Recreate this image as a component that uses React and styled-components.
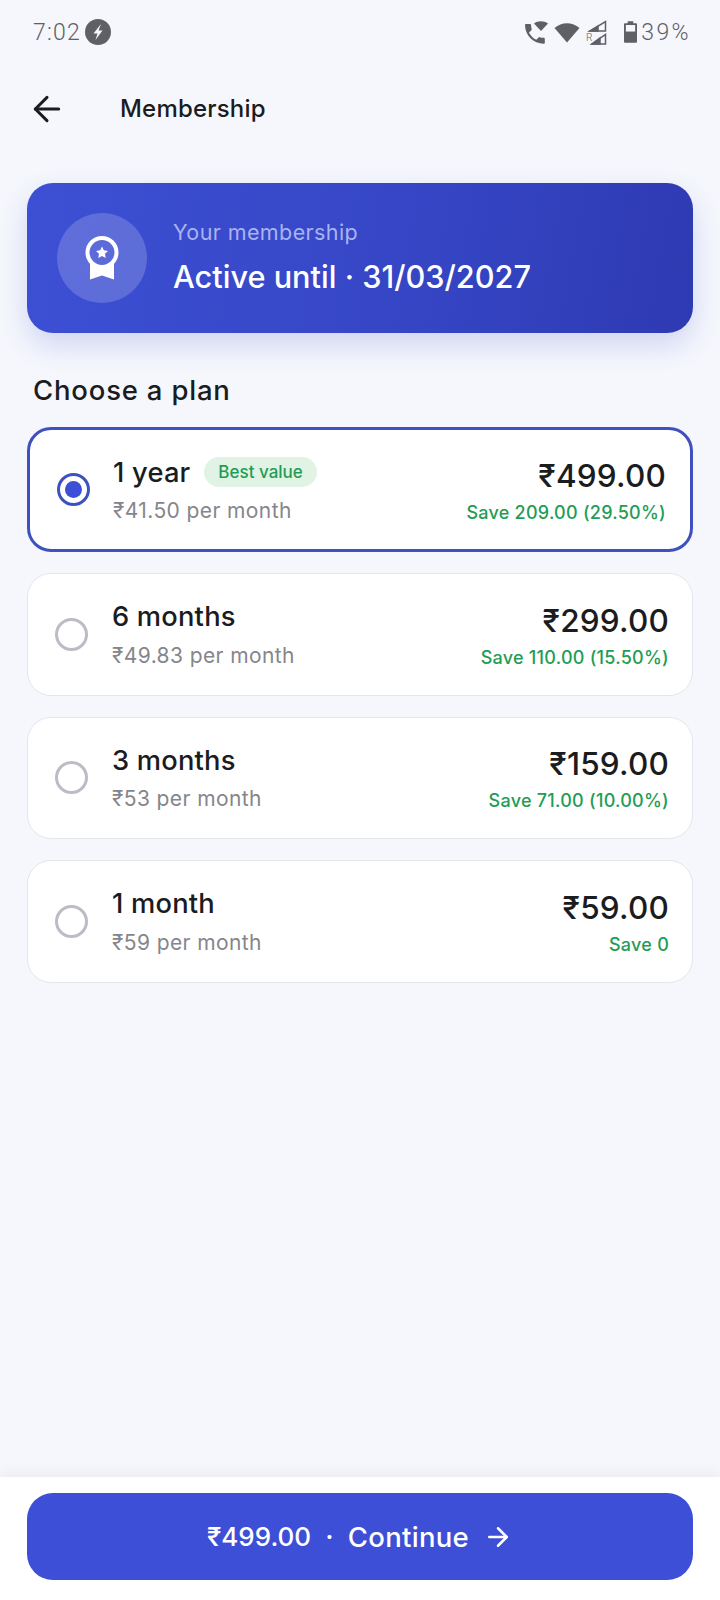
import React from 'react';
import styled, { createGlobalStyle } from 'styled-components';
import { ArrowLeft, ArrowRight } from 'lucide-react';

const GlobalStyle = createGlobalStyle`
  html, body {
    margin: 0;
    padding: 0;
    background: #f5f7fc;
  }
  * {
    box-sizing: border-box;
  }
`;

const Screen = styled.div`
  width: 720px;
  height: 1600px;
  display: flex;
  flex-direction: column;
  background: #f5f7fc;
  font-family: Inter, "Liberation Sans", sans-serif;
  color: #1b1c20;
  overflow: hidden;
`;

const StatusBar = styled.div`
  height: 64px;
  flex: none;
  display: flex;
  align-items: center;
  justify-content: space-between;
  padding: 0 29px 0 33px;
  color: #5f6066;
  font-family: Roboto, sans-serif;
  font-size: 23px;
  font-weight: 300;
  letter-spacing: 1.2px;
`;

const StatusGroup = styled.div`
  display: flex;
  align-items: center;
  gap: ${(p) => p.$gap}px;
`;

const BatteryText = styled.span`
  letter-spacing: 2.4px;
`;

const AppBar = styled.div`
  height: 88px;
  flex: none;
  display: flex;
  align-items: center;
  padding: 0 0 0 27px;
  gap: 53px;
`;

const BackIcon = styled(ArrowLeft)`
  margin-top: 2px;
`;

const Title = styled.div`
  font-size: 24px;
  font-weight: 500;
  letter-spacing: 0.2px;
  color: #1b1c20;
`;

const Content = styled.div`
  flex: 1;
  display: flex;
  flex-direction: column;
  padding: 31px 27px 0;
`;

const Banner = styled.div`
  height: 150px;
  flex: none;
  display: flex;
  align-items: center;
  gap: 26px;
  padding: 0 30px;
  border-radius: 26px;
  background: linear-gradient(100deg, #3d50d4 0%, #3545c4 60%, #2e3ab2 100%);
  box-shadow: 0 12px 28px rgba(61, 80, 212, 0.2);
`;

const Medal = styled.div`
  width: 90px;
  height: 90px;
  flex: none;
  display: flex;
  align-items: center;
  justify-content: center;
  border-radius: 50%;
  background: rgba(255, 255, 255, 0.18);
`;

const BannerText = styled.div`
  display: flex;
  flex-direction: column;
  gap: 13px;
  padding-bottom: 3px;
`;

const BannerLabel = styled.div`
  font-size: 21.500px;
  letter-spacing: 0.4px;
  color: #a9b3f0;
`;

const BannerValue = styled.div`
  font-size: 30.700px;
  font-weight: 500;
  color: #ffffff;
`;

const Heading = styled.div`
  margin: 41px 0 21px 6px;
  font-size: 27.500px;
  font-weight: 500;
  letter-spacing: 0.8px;
  line-height: 32px;
`;

const PlanList = styled.div`
  display: flex;
  flex-direction: column;
  gap: 21px;
`;

const Plan = styled.div`
  height: ${(p) => (p.$selected ? 125 : 122.5)}px;
  display: flex;
  align-items: center;
  padding: 0 ${(p) => (p.$selected ? 24 : 23)}px 0 27px;
  border-radius: 24px;
  background: #ffffff;
  border: ${(p) => (p.$selected ? '3px solid #3f50bf' : '1.5px solid #e4e6ec')};
`;

const Radio = styled.div`
  width: 33px;
  height: 33px;
  flex: none;
  display: flex;
  align-items: center;
  justify-content: center;
  border-radius: 50%;
  border: 3px solid ${(p) => (p.$selected ? '#3f50bf' : '#babcc6')};
`;

const RadioDot = styled.div`
  width: 17px;
  height: 17px;
  border-radius: 50%;
  background: #3d4fd6;
`;

const PlanInfo = styled.div`
  flex: 1;
  margin-left: ${(p) => (p.$selected ? 23 : 24)}px;
  display: flex;
  flex-direction: column;
  gap: 10px;
`;

const PlanNameRow = styled.div`
  display: flex;
  align-items: center;
  gap: 14px;
  height: 32px;
`;

const PlanName = styled.div`
  font-size: 27.300px;
  font-weight: 500;
  letter-spacing: 0.2px;
  color: #1b1c20;
`;

const Badge = styled.div`
  height: 30px;
  padding: 0 14px;
  display: flex;
  align-items: center;
  border-radius: 15px;
  background: #e0f3e4;
  color: #1f9d55;
  font-size: 17px;
  font-weight: 500;
`;

const PerMonth = styled.div`
  font-size: 21px;
  letter-spacing: 0.4px;
  color: #85868c;
`;

const Prices = styled.div`
  display: flex;
  flex-direction: column;
  align-items: flex-end;
  gap: 7px;
`;

const Price = styled.div`
  font-size: 31.500px;
  font-weight: 500;
  letter-spacing: 0.2px;
  color: #1b1c20;
`;

const Save = styled.div`
  font-size: 18px;
  font-weight: 500;
  letter-spacing: 0.25px;
  color: #1f9d55;
`;

const Footer = styled.div`
  height: 123px;
  flex: none;
  padding: 16px 27px 20px;
  background: #ffffff;
  box-shadow: 0 -4px 14px rgba(30, 35, 60, 0.05);
`;

const Continue = styled.div`
  height: 87px;
  display: flex;
  align-items: center;
  justify-content: center;
  gap: 14px;
  border-radius: 26px;
  background: #3d4fd6;
  color: #ffffff;
  font-size: 27.500px;
  font-weight: 500;
  letter-spacing: 0.3px;
`;

const ContinuePrice = styled.span`
  font-size: 26px;
  letter-spacing: 0;
`;

const plans = [
  { name: '1 year', perMonth: '₹41.50 per month', price: '₹499.00', save: 'Save 209.00 (29.50%)', selected: true, badge: 'Best value' },
  { name: '6 months', perMonth: '₹49.83 per month', price: '₹299.00', save: 'Save 110.00 (15.50%)' },
  { name: '3 months', perMonth: '₹53 per month', price: '₹159.00', save: 'Save 71.00 (10.00%)' },
  { name: '1 month', perMonth: '₹59 per month', price: '₹59.00', save: 'Save 0' },
];

const ChargeIcon = () => (
  <svg width="26" height="26" viewBox="0 0 26 26">
    <circle cx="13" cy="13" r="13" fill="#5f6066" />
    <path d="M16 5 L8.500 14.500 H12.500 L10.500 21 L17.500 11.500 H13.500 Z" fill="#f5f7fc" />
  </svg>
);

const CallIcon = () => (
  <svg width="23" height="25" viewBox="0 0 23 25" fill="#5f6066">
    <path
      transform="translate(-3.3 0.7) scale(1.1)"
      d="M6.620 10.790c1.440 2.830 3.760 5.140 6.590 6.590l2.200-2.200c.27-.27.67-.36 1.020-.24 1.120.37 2.330.57 3.570.57.55 0 1 .45 1 1V20c0 .55-.45 1-1 1-9.390 0-17-7.610-17-17 0-.55.45-1 1-1h3.500c.55 0 1 .45 1 1 0 1.250.2 2.450.57 3.570.11.35.03.74-.25 1.020l-2.200 2.200z"
    />
    <path d="M9 3.500 C12.500 0.500 19 0.500 23 3.500 L16 11 Z" />
  </svg>
);

const WifiIcon = () => (
  <svg width="26" height="22" viewBox="0 0 26 22" fill="#5f6066">
    <path d="M0.500 7 C7.500 0.500 18.500 0.500 25.500 7 L13 21.500 Z" />
  </svg>
);

const SignalIcon = () => (
  <svg width="21" height="25" viewBox="0 0 21 25" fill="none" stroke="#5f6066" strokeWidth="1.5">
    <path d="M19.500 1.500 V11 H4 Z" />
    <path d="M12 6 V11 H4 Z" fill="#5f6066" />
    <path d="M19.500 14.500 V24 H6 Z" />
    <path d="M14 18 V24 H6 Z" fill="#5f6066" />
    <text x="0" y="21" fontSize="10" fill="#5f6066" stroke="none" fontFamily="Roboto, sans-serif">R</text>
  </svg>
);

const BatteryIcon = () => (
  <svg width="13" height="22" viewBox="0 0 14 23">
    <path d="M4 0 H10 V2 H13 C13.600 2 14 2.400 14 3 V22 C14 22.600 13.600 23 13 23 H1 C0.400 23 0 22.600 0 22 V3 C0 2.400 0.400 2 1 2 H4 Z" fill="#5f6066" />
    <rect x="2" y="4" width="10" height="7" fill="#f5f7fc" />
  </svg>
);

const MedalIcon = () => (
  <svg width="34" height="44" viewBox="0 0 34 44">
    <path d="M5 24 V43.500 L17 39.500 L29 43.500 V24 Z" fill="#ffffff" />
    <circle cx="17" cy="16.500" r="14.500" fill="#5c6bd8" stroke="#ffffff" strokeWidth="4" />
    <path d="M17 10.500 L18.800 14.300 L23 14.900 L20 17.800 L20.700 22 L17 20 L13.300 22 L14 17.800 L11 14.900 L15.200 14.300 Z" fill="#ffffff" />
  </svg>
);

const App = () => {
  return (
    <Screen>
      <GlobalStyle />
      <StatusBar>
        <StatusGroup $gap={4}>
          7:02
          <ChargeIcon />
        </StatusGroup>
        <StatusGroup $gap={17}>
          <StatusGroup $gap={6}>
            <CallIcon />
            <WifiIcon />
            <SignalIcon />
          </StatusGroup>
          <StatusGroup $gap={4}>
            <BatteryIcon />
            <BatteryText>39%</BatteryText>
          </StatusGroup>
        </StatusGroup>
      </StatusBar>
      <AppBar>
        <BackIcon size={40} strokeWidth={1.8} color="#1b1c20" />
        <Title>Membership</Title>
      </AppBar>
      <Content>
        <Banner>
          <Medal>
            <MedalIcon />
          </Medal>
          <BannerText>
            <BannerLabel>Your membership</BannerLabel>
            <BannerValue>Active until · 31/03/2027</BannerValue>
          </BannerText>
        </Banner>
        <Heading>Choose a plan</Heading>
        <PlanList>
          {plans.map((plan) => (
            <Plan key={plan.name} $selected={plan.selected}>
              <Radio $selected={plan.selected}>
                {plan.selected && <RadioDot />}
              </Radio>
              <PlanInfo $selected={plan.selected}>
                <PlanNameRow>
                  <PlanName>{plan.name}</PlanName>
                  {plan.badge && <Badge>{plan.badge}</Badge>}
                </PlanNameRow>
                <PerMonth>{plan.perMonth}</PerMonth>
              </PlanInfo>
              <Prices>
                <Price>{plan.price}</Price>
                <Save>{plan.save}</Save>
              </Prices>
            </Plan>
          ))}
        </PlanList>
      </Content>
      <Footer>
        <Continue>
          <ContinuePrice>₹499.00</ContinuePrice>
          <span>·</span>
          <span>Continue</span>
          <ArrowRight size={30} strokeWidth={2} />
        </Continue>
      </Footer>
    </Screen>
  );
};

export default App;
